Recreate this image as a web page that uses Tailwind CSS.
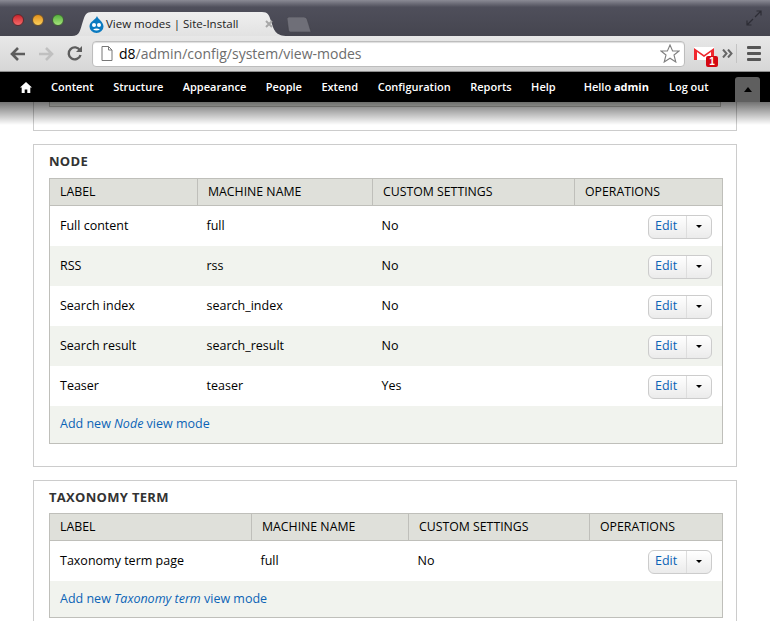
<!DOCTYPE html>
<html lang="en">
<head>
<meta charset="UTF-8">
<title>View modes | Site-Install</title>
<script src="https://cdn.jsdelivr.net/npm/@tailwindcss/browser@4"></script>
</head>
<body class="bg-white">
<div class="relative w-[770px] h-[621px] overflow-hidden bg-white font-['Open_Sans','DejaVu_Sans',sans-serif] text-[12.5px] text-black">

  <!-- browser title bar with tabs -->
  <div class="relative h-[36px] bg-gradient-to-b from-[#8b8b95] via-[#4f4f5b] via-[20%] to-[#45454f]">
    <div class="absolute left-[12px] top-[14px] flex gap-[8px]">
      <span class="w-[12px] h-[12px] rounded-full bg-gradient-to-b from-[#c8222c] to-[#f6686a] border border-[#5a2a30]"></span>
      <span class="w-[12px] h-[12px] rounded-full bg-gradient-to-b from-[#e09016] to-[#fbd05a] border border-[#6a5030]"></span>
      <span class="w-[12px] h-[12px] rounded-full bg-gradient-to-b from-[#54b03c] to-[#a6e57c] border border-[#3f6038]"></span>
    </div>
    <svg class="absolute left-[72px] top-[12px]" width="220" height="24" viewBox="0 0 220 24"><defs><linearGradient id="tabg" x1="0" y1="0" x2="0" y2="1"><stop offset="0" stop-color="#efefef"/><stop offset="1" stop-color="#e2e2e2"/></linearGradient></defs><path d="M0 24C8 24 8 18 11 9C13 3 14 0 20 0H190C196 0 197 3 199 9C202 18 203 24 216 24Z" fill="url(#tabg)"/></svg>
    <svg class="absolute left-[287px] top-[17px]" width="26" height="15" viewBox="0 0 26 15"><path d="M0 1.500Q0 0 2 0H17Q19 0 20 2L24 15H3Q2 15 1.500 13Z" fill="#6f6f78" stroke="#3e3e47" stroke-width=".5"/></svg>
    <div class="absolute left-[89px] top-[15px] flex items-center gap-[2px] text-[11.5px] text-[#222] leading-[18px]">
      <svg width="15" height="17" viewBox="0 0 15 17"><path d="M8 0C8.500 3 14.500 5.500 14.500 10.500A7 6.500 0 0 1 .5 10.500C.5 5.500 6.500 4 8 0Z" fill="#0a7ac0"/><circle cx="5" cy="9" r="2" fill="#fff"/><circle cx="10" cy="9" r="2" fill="#fff"/><path d="M4 13.500Q7.500 11.500 11 13.500Q7.500 15.500 4 13.500Z" fill="#fff"/></svg>
      <span>View modes | Site-Install</span>
    </div>
    <svg class="absolute left-[265px] top-[20px]" width="8" height="8" viewBox="0 0 8 8" fill="none" stroke="#a8a8a8" stroke-width="2"><path d="M1 1L7 7M7 1L1 7"/></svg>
    <svg class="absolute left-[746px] top-[10px]" width="16" height="16" viewBox="0 0 16 16" fill="none" stroke="#2d2d35" stroke-width="1.200"><path d="M9 7L15 1M10.500 1H15V5.500M7 9L1 15M1 10.500V15H5.500"/></svg>
  </div>

  <!-- browser toolbar -->
  <div class="relative flex items-center h-[36px] bg-gradient-to-b from-[#e8e8e8] to-[#d6d6d6] border-b border-[#8e8e8e]">
    <svg class="ml-[9px]" width="17" height="16" viewBox="0 0 17 16" fill="none" stroke="#5d5d5d" stroke-width="2.600"><path d="M16 8H3M9 2L3 8L9 14"/></svg>
    <svg class="ml-[12px]" width="17" height="16" viewBox="0 0 17 16" fill="none" stroke="#c0c0c0" stroke-width="2.600"><path d="M1 8H14M8 2L14 8L8 14"/></svg>
    <svg class="ml-[11px]" width="17" height="17" viewBox="0 0 17 17" fill="none"><path d="M14 5.500A6 6 0 1 0 14.500 10" stroke="#5d5d5d" stroke-width="2.400"/><path d="M10 7H16V1Z" fill="#5d5d5d"/></svg>
    <div class="ml-[9px] flex items-center w-[593px] h-[26px] bg-white rounded-[4px] border border-[#bdbdbd] shadow-[inset_0_1px_1px_#ddd]">
      <svg class="ml-[8px]" width="12" height="15" viewBox="0 0 12 15" fill="#fff" stroke="#777"><path d="M1 .5H7.500L11 4V14.500H1ZM7.500 .5V4H11"/></svg>
      <span class="ml-[6px] text-[14px] leading-[20px] text-[#6d6d6d]"><span class="text-black">d8</span>/admin/config/system/view-modes</span>
      <svg class="ml-auto mr-[4px]" width="20" height="19" viewBox="0 0 20 19" fill="#fff" stroke="#808080" stroke-width="1.100"><path d="M10 1L12.600 7H19L14 11L15.800 18L10 14.200L4.200 18L6 11L1 7H7.400Z"/></svg>
    </div>
    <div class="relative ml-[9px] w-[20px] h-[14px]">
      <svg width="20" height="14" viewBox="0 0 20 14"><path d="M0 0H20V13H0Z" fill="#fff"/><path d="M0 1V13H3V5L10 10L17 5V13H20V1L10 8Z" fill="#f0282e"/></svg>
      <span class="absolute left-[12px] top-[9px] w-[12px] h-[11px] rounded-[2px] bg-[#d40812] text-white text-[10px] leading-[11px] font-bold text-center font-['Liberation_Sans',sans-serif]">1</span>
    </div>
    <svg class="ml-[8px]" width="11" height="9" viewBox="0 0 11 9" fill="none" stroke="#666" stroke-width="2"><path d="M1 .5L4.500 4.500L1 8.500M6 .5L9.500 4.500L6 8.500"/></svg>
    <span class="ml-[3px] w-px h-[19px] bg-[#c4c4c4]"></span>
    <div class="ml-[10px] flex flex-col gap-[3px]">
      <span class="w-[14px] h-[3px] rounded-[1px] bg-[#555]"></span>
      <span class="w-[14px] h-[3px] rounded-[1px] bg-[#555]"></span>
      <span class="w-[14px] h-[3px] rounded-[1px] bg-[#555]"></span>
    </div>
  </div>

  <!-- admin toolbar -->
  <div class="relative z-10 flex items-center h-[30px] bg-black text-white text-[11px] font-semibold">
    <svg class="ml-[20px]" width="12" height="11" viewBox="0 0 12 11" fill="#fff"><path d="M6 0L12 5.500H10.300V11H7.300V7.500H4.700V11H1.700V5.500H0Z"/></svg>
    <div class="ml-[19px] flex gap-[19.5px]">
      <a>Content</a><a>Structure</a><a>Appearance</a><a>People</a><a>Extend</a><a>Configuration</a><a>Reports</a><a>Help</a>
    </div>
    <div class="ml-[28px] flex gap-[20px]">
      <span>Hello <b class="font-bold">admin</b></span><a>Log out</a>
    </div>
    <div class="absolute left-[735px] top-[5px] flex items-center justify-center w-[25px] h-[25px] rounded-t-[3px] bg-[#5f5f5f]">
      <span class="w-0 h-0 border-x-[4px] border-x-transparent border-b-[5px] border-b-black"></span>
    </div>
  </div>
  <div class="absolute z-[5] left-0 top-[102px] w-full h-[23px] bg-gradient-to-b from-black/55 to-transparent"></div>

  <!-- page content -->
  <div class="px-[33px] text-[12.5px]">
    <div class="h-[29px] border border-t-0 border-[#ccc] px-[15px]">
      <div class="h-[5px] border border-t-0 border-[#bfbfba] bg-[#f1f3ee]"></div>
    </div>

    <section class="mt-[13px] h-[323px] border border-[#ccc] px-[15px]">
      <h2 class="h-[33px] pt-[7px] text-[13px] leading-[18px] font-bold text-[#333] tracking-[.3px]">NODE</h2>
      <table class="w-[674px] table-fixed border-collapse border border-[#bfbfba]">
        <thead>
          <tr class="h-[27px] bg-[#dfe0da] border-b border-[#bfbfba] text-left text-[12.3px]">
            <th class="w-[148px] pl-[10px] font-normal border-r border-[#bfbfba]">LABEL</th>
            <th class="w-[175px] pl-[10px] font-normal border-r border-[#bfbfba]">MACHINE NAME</th>
            <th class="w-[202px] pl-[10px] font-normal border-r border-[#bfbfba]">CUSTOM SETTINGS</th>
            <th class="pl-[10px] font-normal">OPERATIONS</th>
          </tr>
        </thead>
        <tbody>
          <tr class="h-[40px]"><td class="pl-[10px] pt-[2px]">Full content</td><td class="pl-[9px] pt-[2px]">full</td><td class="pl-[9px] pt-[2px]">No</td>
            <td class="pr-[10px] pt-[2px]"><div class="ml-auto flex items-center w-[64px] h-[24px] rounded-[6px] border border-[#ccc] bg-gradient-to-b from-white to-[#ebebeb]"><span class="w-[37px] pl-[6px] text-[#0b63b6]">Edit</span><span class="flex-1 h-full border-l border-[#ddd] flex items-center justify-center"><i class="w-0 h-0 border-x-[3px] border-x-transparent border-t-[3px] border-t-black"></i></span></div></td></tr>
          <tr class="h-[40px] bg-[#f1f3ee]"><td class="pl-[10px] pt-[2px]">RSS</td><td class="pl-[9px] pt-[2px]">rss</td><td class="pl-[9px] pt-[2px]">No</td>
            <td class="pr-[10px] pt-[2px]"><div class="ml-auto flex items-center w-[64px] h-[24px] rounded-[6px] border border-[#ccc] bg-gradient-to-b from-white to-[#ebebeb]"><span class="w-[37px] pl-[6px] text-[#0b63b6]">Edit</span><span class="flex-1 h-full border-l border-[#ddd] flex items-center justify-center"><i class="w-0 h-0 border-x-[3px] border-x-transparent border-t-[3px] border-t-black"></i></span></div></td></tr>
          <tr class="h-[40px]"><td class="pl-[10px] pt-[2px]">Search index</td><td class="pl-[9px] pt-[2px]">search_index</td><td class="pl-[9px] pt-[2px]">No</td>
            <td class="pr-[10px] pt-[2px]"><div class="ml-auto flex items-center w-[64px] h-[24px] rounded-[6px] border border-[#ccc] bg-gradient-to-b from-white to-[#ebebeb]"><span class="w-[37px] pl-[6px] text-[#0b63b6]">Edit</span><span class="flex-1 h-full border-l border-[#ddd] flex items-center justify-center"><i class="w-0 h-0 border-x-[3px] border-x-transparent border-t-[3px] border-t-black"></i></span></div></td></tr>
          <tr class="h-[40px] bg-[#f1f3ee]"><td class="pl-[10px] pt-[2px]">Search result</td><td class="pl-[9px] pt-[2px]">search_result</td><td class="pl-[9px] pt-[2px]">No</td>
            <td class="pr-[10px] pt-[2px]"><div class="ml-auto flex items-center w-[64px] h-[24px] rounded-[6px] border border-[#ccc] bg-gradient-to-b from-white to-[#ebebeb]"><span class="w-[37px] pl-[6px] text-[#0b63b6]">Edit</span><span class="flex-1 h-full border-l border-[#ddd] flex items-center justify-center"><i class="w-0 h-0 border-x-[3px] border-x-transparent border-t-[3px] border-t-black"></i></span></div></td></tr>
          <tr class="h-[40px]"><td class="pl-[10px] pt-[2px]">Teaser</td><td class="pl-[9px] pt-[2px]">teaser</td><td class="pl-[9px] pt-[2px]">Yes</td>
            <td class="pr-[10px] pt-[2px]"><div class="ml-auto flex items-center w-[64px] h-[24px] rounded-[6px] border border-[#ccc] bg-gradient-to-b from-white to-[#ebebeb]"><span class="w-[37px] pl-[6px] text-[#0b63b6]">Edit</span><span class="flex-1 h-full border-l border-[#ddd] flex items-center justify-center"><i class="w-0 h-0 border-x-[3px] border-x-transparent border-t-[3px] border-t-black"></i></span></div></td></tr>
          <tr class="h-[38px] bg-[#f1f3ee]"><td colspan="4" class="pl-[10px] text-[#0b63b6]">Add new <em>Node</em> view mode</td></tr>
        </tbody>
      </table>
    </section>

    <section class="mt-[13px] h-[200px] border border-[#ccc] px-[15px]">
      <h2 class="h-[32px] pt-[7px] text-[13px] leading-[18px] font-bold text-[#333] tracking-[.3px]">TAXONOMY TERM</h2>
      <table class="w-[674px] table-fixed border-collapse border border-[#bfbfba]">
        <thead>
          <tr class="h-[27px] bg-[#dfe0da] border-b border-[#bfbfba] text-left text-[12.3px]">
            <th class="w-[202px] pl-[10px] font-normal border-r border-[#bfbfba]">LABEL</th>
            <th class="w-[157px] pl-[10px] font-normal border-r border-[#bfbfba]">MACHINE NAME</th>
            <th class="w-[181px] pl-[10px] font-normal border-r border-[#bfbfba]">CUSTOM SETTINGS</th>
            <th class="pl-[10px] font-normal">OPERATIONS</th>
          </tr>
        </thead>
        <tbody>
          <tr class="h-[40px]"><td class="pl-[10px] pt-[2px]">Taxonomy term page</td><td class="pl-[9px] pt-[2px]">full</td><td class="pl-[9px] pt-[2px]">No</td>
            <td class="pr-[10px] pt-[2px]"><div class="ml-auto flex items-center w-[64px] h-[24px] rounded-[6px] border border-[#ccc] bg-gradient-to-b from-white to-[#ebebeb]"><span class="w-[37px] pl-[6px] text-[#0b63b6]">Edit</span><span class="flex-1 h-full border-l border-[#ddd] flex items-center justify-center"><i class="w-0 h-0 border-x-[3px] border-x-transparent border-t-[3px] border-t-black"></i></span></div></td></tr>
          <tr class="h-[37px] bg-[#f1f3ee]"><td colspan="4" class="pl-[10px] pt-[2px] text-[#0b63b6]">Add new <em>Taxonomy term</em> view mode</td></tr>
        </tbody>
      </table>
    </section>
  </div>
</div>
</body>
</html>
